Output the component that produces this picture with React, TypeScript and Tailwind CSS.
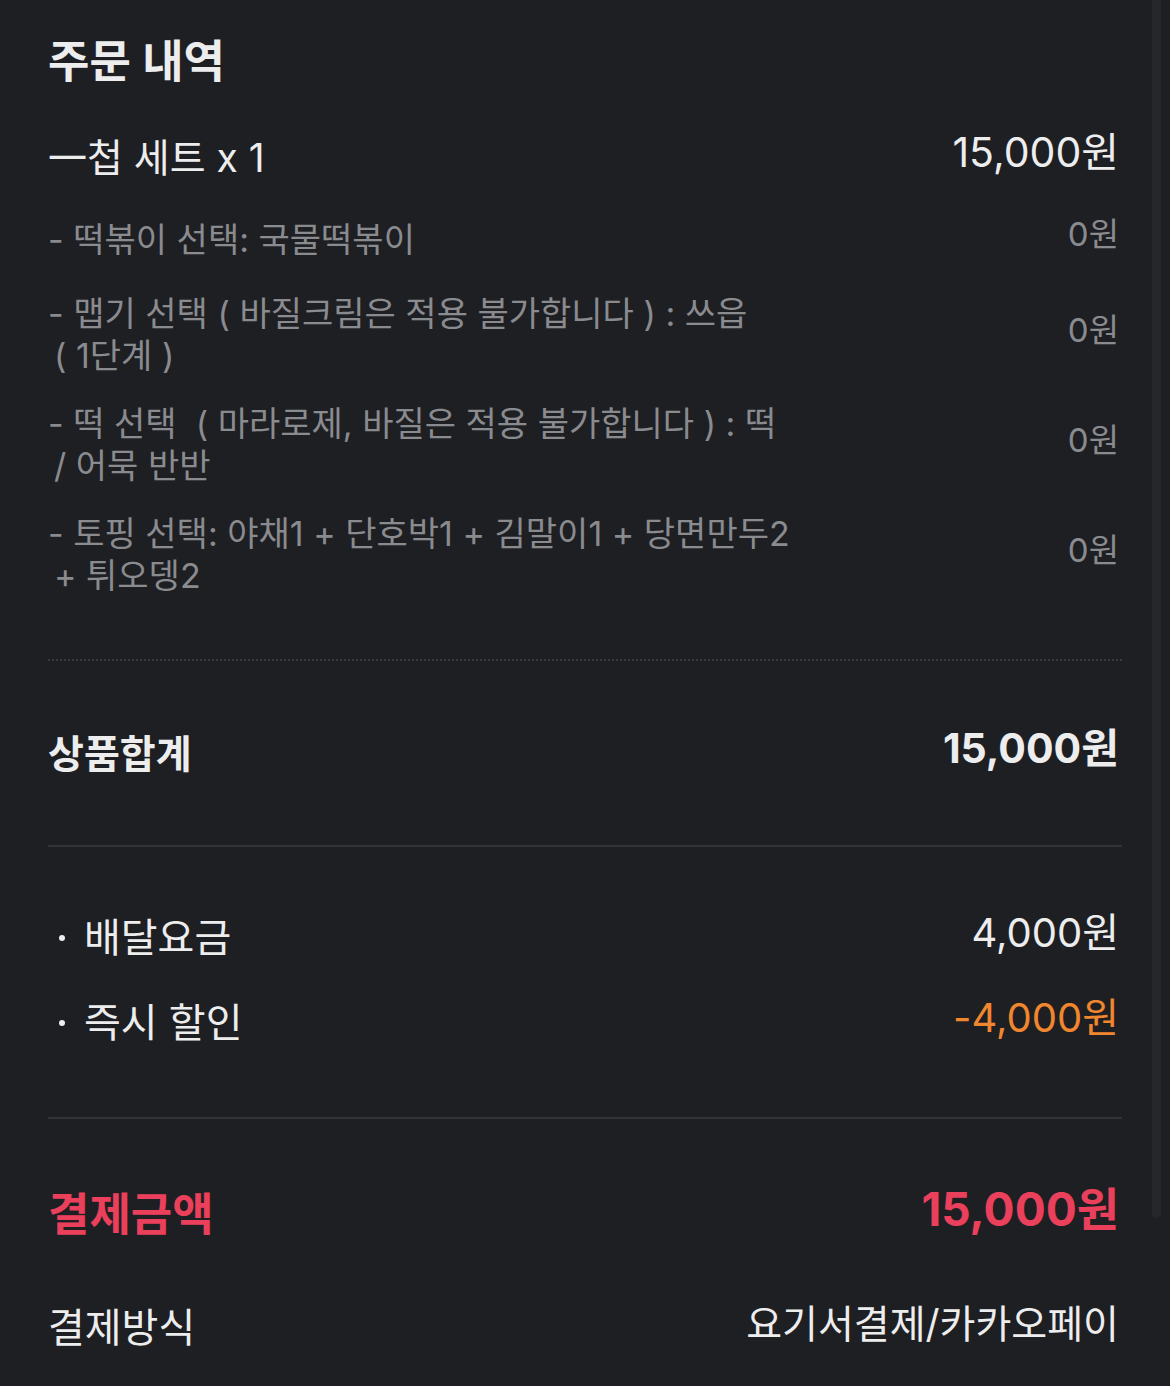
import React from "react";

const options = [
  { lines: ["- 떡볶이 선택: 국물떡볶이"], price: "0원", mt: "mt-[37px]" },
  {
    lines: ["- 맵기 선택 ( 바질크림은 적용 불가합니다 ) : 쓰읍", "( 1단계 )"],
    price: "0원",
    mt: "mt-[32px]",
  },
  {
    lines: ["- 떡 선택  ( 마라로제, 바질은 적용 불가합니다 ) : 떡", "/ 어묵 반반"],
    price: "0원",
    mt: "mt-[26px]",
  },
  {
    lines: ["- 토핑 선택: 야채1 + 단호박1 + 김말이1 + 당면만두2", "+ 튀오뎅2"],
    price: "0원",
    mt: "mt-[26px]",
  },
];

const App = () => {
  return (
    <div className="relative min-h-screen w-full bg-[#1e1f23] font-['Inter','Noto_Sans_CJK_KR',sans-serif] text-[#ededee]">
      {/* scrollbar */}
      <div className="absolute right-[9px] top-0 h-[1218px] w-[9px] rounded-b-full bg-[#26272b]" />

      <div className="px-12 pt-[31px] pb-[35px]">
        <div className="flex h-[60px] items-center">
          <h1 className="text-[45px] font-semibold leading-none">주문 내역</h1>
        </div>

        <div className="mt-[42px] flex h-[48px] items-center justify-between">
          <span className="text-[39px] leading-none">一첩 세트 x 1</span>
          <span className="mb-[10px] pr-[3px] text-[41px] leading-none">15,000원</span>
        </div>

        {options.map((opt, i) => (
          <div key={i} className={`${opt.mt} flex items-center justify-between`}>
            <div className="text-[34px] leading-none text-[#8a8b8f]">
              <div className="flex h-[42px] items-center whitespace-pre">{opt.lines[0]}</div>
              {opt.lines[1] && (
                <div className="flex h-[42px] items-center pl-[6px]">{opt.lines[1]}</div>
              )}
            </div>
            <span className="mb-[10px] pr-[3px] text-[33px] leading-none text-[#8a8b8f]">
              {opt.price}
            </span>
          </div>
        ))}

        <div className="mt-[62px] border-t-2 border-dotted border-[#393a3f]" />

        <div className="mt-[67px] flex h-[50px] items-center justify-between">
          <span className="text-[39px] font-bold leading-none">상품합계</span>
          <span className="mb-[10px] pr-[3px] text-[41px] font-bold leading-none">15,000원</span>
        </div>

        <div className="mt-[67px] h-[2px] bg-[#323338]" />

        <div className="mt-[67px] flex h-[48px] items-center justify-between">
          <div className="flex items-center">
            <span className="ml-[11px] mr-[19px] h-[6px] w-[6px] rounded-full bg-[#ededee]" />
            <span className="text-[40px] leading-none">배달요금</span>
          </div>
          <span className="mb-[10px] pr-[3px] text-[40px] leading-none">4,000원</span>
        </div>

        <div className="mt-[37px] flex h-[48px] items-center justify-between">
          <div className="flex items-center">
            <span className="ml-[11px] mr-[19px] h-[6px] w-[6px] rounded-full bg-[#ededee]" />
            <span className="text-[40px] leading-none">즉시 할인</span>
          </div>
          <span className="mb-[10px] pr-[3px] text-[40px] leading-none text-[#f0862e]">-4,000원</span>
        </div>

        <div className="mt-[70px] h-[2px] bg-[#323338]" />

        <div className="mt-[67px] flex h-[56px] items-center justify-between text-[#ea405b]">
          <span className="text-[45px] font-bold leading-none">결제금액</span>
          <span className="mb-[10px] pr-[3px] text-[46px] font-bold leading-none">15,000원</span>
        </div>

        <div className="mt-[62px] flex h-[48px] items-center justify-between">
          <span className="text-[40px] leading-none">결제방식</span>
          <span className="mb-[10px] pr-[3px] text-[39px] leading-none">요기서결제/카카오페이</span>
        </div>
      </div>
    </div>
  );
};

export default App;
